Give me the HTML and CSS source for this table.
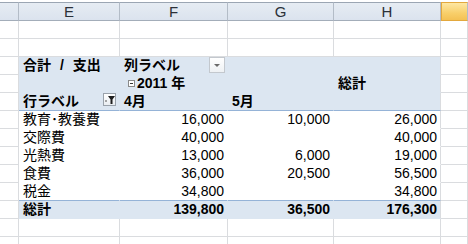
FILE: index.html
```html
<!DOCTYPE html>
<html>
<head>
<meta charset="UTF-8">
<title>ピボットテーブル</title>
<link rel="stylesheet" href="styles.css">
</head>
<body>
<div class="sheet">
  <!-- column letters -->
  <div class="h"></div>
  <div class="h">E</div>
  <div class="h">F</div>
  <div class="h">G</div>
  <div class="h">H</div>
  <div class="h sel"></div>

  <div class="c"></div><div class="c"></div><div class="c"></div><div class="c"></div><div class="c"></div><div class="c"></div>
  <div class="c"></div><div class="c"></div><div class="c"></div><div class="c"></div><div class="c"></div><div class="c"></div>

  <!-- pivot header -->
  <div class="c"></div>
  <div class="c ph b sum">合計 / 支出</div>
  <div class="c ph b drop">列ラベル<span class="dd"><i></i></span></div>
  <div class="c ph"></div>
  <div class="c ph last"></div>
  <div class="c"></div>

  <div class="c"></div>
  <div class="c ph"></div>
  <div class="c ph b yr"><span class="minus"></span>2011 年</div>
  <div class="c ph"></div>
  <div class="c ph b last">総計</div>
  <div class="c"></div>

  <div class="c"></div>
  <div class="c ph b line drop">行ラベル<span class="flt"><svg width="10" height="10" viewBox="0 0 10 10"><path d="M0 6h2" stroke="#555" stroke-width="1"/><path d="M3 1h7L7.5 4.5V9h-2V4.5z" fill="#1f1f1f"/></svg></span></div>
  <div class="c ph b line">4月</div>
  <div class="c ph b line">5月</div>
  <div class="c ph line last"></div>
  <div class="c"></div>

  <!-- data rows -->
  <div class="c"></div><div class="c pd">教育･教養費</div><div class="c pd n">16,000</div><div class="c pd n">10,000</div><div class="c pd n last">26,000</div><div class="c"></div>
  <div class="c"></div><div class="c pd">交際費</div><div class="c pd n">40,000</div><div class="c pd n"></div><div class="c pd n last">40,000</div><div class="c"></div>
  <div class="c"></div><div class="c pd">光熱費</div><div class="c pd n">13,000</div><div class="c pd n">6,000</div><div class="c pd n last">19,000</div><div class="c"></div>
  <div class="c"></div><div class="c pd">食費</div><div class="c pd n">36,000</div><div class="c pd n">20,500</div><div class="c pd n last">56,500</div><div class="c"></div>
  <div class="c"></div><div class="c pd line">税金</div><div class="c pd n line">34,800</div><div class="c pd n line"></div><div class="c pd n line last">34,800</div><div class="c"></div>

  <!-- grand total -->
  <div class="c"></div>
  <div class="c tot b">総計</div>
  <div class="c tot b n">139,800</div>
  <div class="c tot b n">36,500</div>
  <div class="c tot b n last">176,300</div>
  <div class="c"></div>

  <div class="c"></div><div class="c"></div><div class="c"></div><div class="c"></div><div class="c"></div><div class="c"></div>
  <div class="c"></div><div class="c"></div><div class="c"></div><div class="c"></div><div class="c"></div><div class="c"></div>
</div>
</body>
</html>
```

FILE: styles.css
```css
*{margin:0;padding:0;box-sizing:border-box}
body{background:#fff;font-family:"Liberation Sans","Noto Sans CJK JP",sans-serif;font-size:14px;color:#000;overflow:hidden}
.sheet{display:grid;grid-template-columns:19px 101px 108px 106px 107px 1fr;grid-template-rows:19px;grid-auto-rows:18px;margin-top:2px}

/* column letters */
.h{background:linear-gradient(#e6ecf3,#dbe3ee);border-top:1px solid #9ba6b3;border-right:1px solid #b3bcc7;border-bottom:1px solid #a3adb9;text-align:center;color:#2b3038;font-size:15px;line-height:17px}
.h.sel{background:linear-gradient(#fde7a3,#f8cf6a 60%,#f4c154);border-left:1px solid #e3a83d;border-top-color:#e3a83d;border-bottom-color:#e3a83d}

/* cells */
.c{border-right:1px solid #dadcdf;border-bottom:1px solid #dadcdf;padding:0 4px 0 4px;line-height:17px;white-space:nowrap;position:relative}
.b{font-weight:bold}
.n{text-align:right;padding-right:3px}
.ph{background:#dce6f1;border-color:#dce6f1}
.pd{border-color:#fff}
.tot{background:#dce6f1;border-color:#dce6f1}
.c.last{border-right-color:#dadcdf}
.c.line{border-bottom-color:#95b3d7}
.yr{padding-left:8px}
.sum{word-spacing:5px}

/* collapse box */
.minus{display:inline-block;width:7px;height:7px;border:1px solid #8a8a8a;background:#fff;margin-right:2px;vertical-align:1px;position:relative}
.minus::after{content:"";position:absolute;left:1px;top:2px;width:3px;height:1px;background:#333}

/* dropdown buttons */
.dd{position:absolute;right:2px;top:0;width:16px;height:16px;border:1px solid #c3c8ce;background:linear-gradient(#fff,#eef1f4)}
.dd i{position:absolute;left:4px;top:6px;border-left:3px solid transparent;border-right:3px solid transparent;border-top:3px solid #6a6a6a}
.flt{position:absolute;right:3px;top:0;width:13px;height:13px;border:1px solid #9aa2ab;background:linear-gradient(#fff,#e9edf1)}
.flt svg{position:absolute;left:1px;top:1px}
```
